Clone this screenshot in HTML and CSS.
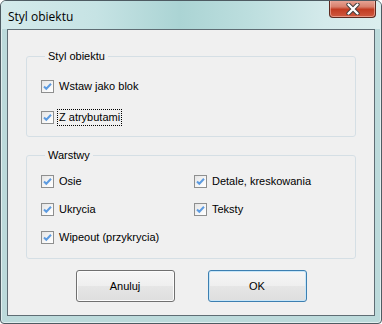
FILE: index.html
```html
<!DOCTYPE html>
<html>
<head>
  <meta charset="utf-8">
  <link rel="stylesheet" href="styles.css">
</head>
<body>
  <div class="window">
    <div class="titlebar">
      <span class="title">Styl obiektu</span>
      <div class="close">
        <svg width="16" height="12" viewBox="0 0 16 12">
          <path d="M3.5 1.5 L12.5 10.5 M12.5 1.5 L3.5 10.5" stroke="#3b3b3b" stroke-width="4.2" stroke-linecap="round"/>
          <path d="M3.5 1.5 L12.5 10.5 M12.5 1.5 L3.5 10.5" stroke="#ffffff" stroke-width="2.4" stroke-linecap="round"/>
        </svg>
      </div>
    </div>

    <div class="client">
      <fieldset class="group group-style">
        <legend>Styl obiektu</legend>
        <label class="check">
          <span class="box"><svg width="13" height="13" viewBox="0 0 13 13"><path d="M3 6.5 L5.3 8.8 L10 3.8" fill="none" stroke="#5d9be0" stroke-width="2"/></svg></span>
          <span class="text">Wstaw jako blok</span>
        </label>
        <label class="check">
          <span class="box"><svg width="13" height="13" viewBox="0 0 13 13"><path d="M3 6.5 L5.3 8.8 L10 3.8" fill="none" stroke="#5d9be0" stroke-width="2"/></svg></span>
          <span class="text focus">Z atrybutami</span>
        </label>
      </fieldset>

      <fieldset class="group group-layers">
        <legend>Warstwy</legend>
        <div class="layer-grid">
          <label class="check">
            <span class="box"><svg width="13" height="13" viewBox="0 0 13 13"><path d="M3 6.5 L5.3 8.8 L10 3.8" fill="none" stroke="#5d9be0" stroke-width="2"/></svg></span>
            <span class="text">Osie</span>
          </label>
          <label class="check">
            <span class="box"><svg width="13" height="13" viewBox="0 0 13 13"><path d="M3 6.5 L5.3 8.8 L10 3.8" fill="none" stroke="#5d9be0" stroke-width="2"/></svg></span>
            <span class="text">Detale, kreskowania</span>
          </label>
          <label class="check">
            <span class="box"><svg width="13" height="13" viewBox="0 0 13 13"><path d="M3 6.5 L5.3 8.8 L10 3.8" fill="none" stroke="#5d9be0" stroke-width="2"/></svg></span>
            <span class="text">Ukrycia</span>
          </label>
          <label class="check">
            <span class="box"><svg width="13" height="13" viewBox="0 0 13 13"><path d="M3 6.5 L5.3 8.8 L10 3.8" fill="none" stroke="#5d9be0" stroke-width="2"/></svg></span>
            <span class="text">Teksty</span>
          </label>
          <label class="check">
            <span class="box"><svg width="13" height="13" viewBox="0 0 13 13"><path d="M3 6.5 L5.3 8.8 L10 3.8" fill="none" stroke="#5d9be0" stroke-width="2"/></svg></span>
            <span class="text">Wipeout (przykrycia)</span>
          </label>
        </div>
      </fieldset>

      <div class="buttons">
        <button class="btn">Anuluj</button>
        <button class="btn btn-default">OK</button>
      </div>
    </div>
  </div>
</body>
</html>
```

FILE: styles.css
```css
body {
  margin: 0;
  background: #ffffff;
  font-family: Tahoma, "Liberation Sans", Arial, sans-serif;
  font-size: 11px;
  color: #000;
}

.window {
  width: 382px;
  height: 324px;
  box-sizing: border-box;
  border: 1px solid #4e5b62;
  border-radius: 6px 6px 4px 4px;
  background: #bcdadb;
  box-shadow: inset 0 0 0 1px rgba(255, 255, 255, 0.55);
  overflow: hidden;
}

.titlebar {
  height: 28px;
  display: flex;
  justify-content: space-between;
  align-items: flex-start;
  background: linear-gradient(90deg, #d4eaeb 0%, #c6e3e4 25%, #abd4d4 47%, #bcdede 65%, #d4eaeb 85%, #dbeeee 100%);
}

.title {
  padding: 8px 0 0 7px;
  font-family: "Open Sans", "Noto Sans", sans-serif;
  font-size: 12px;
  line-height: 16px;
  color: #000;
}

.close {
  width: 47px;
  height: 18px;
  margin: -1px 5px 0 0;
  box-sizing: border-box;
  border: 1px solid #5c2a20;
  border-top: none;
  border-radius: 0 0 4px 4px;
  background: linear-gradient(180deg, #e9a89a 0%, #d8806c 40%, #c23c22 55%, #cf5a40 100%);
  box-shadow: inset 0 0 0 1px rgba(255, 210, 200, 0.5);
  display: flex;
  align-items: center;
  justify-content: center;
}

.close svg {
  display: block;
}

.client {
  margin: 0 6px;
  height: 287px;
  box-sizing: border-box;
  border: 1px solid #5f6d74;
  background: #f0f0f0;
  padding: 20px 18px 0;
}

.group {
  margin: 0;
  border: 1px solid #d5dfe5;
  border-radius: 3px;
  padding: 15px 14px 10px;
}

.group legend {
  margin-left: 4px;
  padding: 0 3px;
  line-height: 13px;
}

.group-layers {
  margin-top: 12px;
  padding: 11px 14px 12px;
}

.check {
  display: flex;
  align-items: center;
  height: 17px;
}

.group-style .check + .check {
  margin-top: 14px;
}

.box {
  width: 13px;
  height: 13px;
  box-sizing: border-box;
  border: 1px solid #8e8f8f;
  background: linear-gradient(135deg, #e4e4e4 0%, #f7f7f7 60%, #ffffff 100%);
  margin-right: 3px;
  display: flex;
}

.box svg {
  margin: -1px;
}

.text {
  padding: 0 1px;
  line-height: 15px;
  border: 1px solid transparent;
}

.text.focus {
  border: 1px dotted #000;
}

.layer-grid {
  display: grid;
  grid-template-columns: 153px 1fr;
  row-gap: 11px;
}

.buttons {
  display: flex;
  justify-content: center;
  gap: 33px;
  margin-top: 11px;
}

.btn {
  width: 99px;
  height: 32px;
  border: 1px solid #707070;
  border-radius: 3px;
  background: linear-gradient(180deg, #f6f6f6 0%, #efefef 50%, #e6e6e6 51%, #dedede 100%);
  box-shadow: inset 0 0 0 1px #fcfcfc;
  font-family: Tahoma, "Liberation Sans", Arial, sans-serif;
  font-size: 11px;
  color: #000;
  padding: 0;
}

.btn-default {
  border-color: #3c7fb1;
  box-shadow: inset 0 0 0 1px #c8e6f8;
}
```
